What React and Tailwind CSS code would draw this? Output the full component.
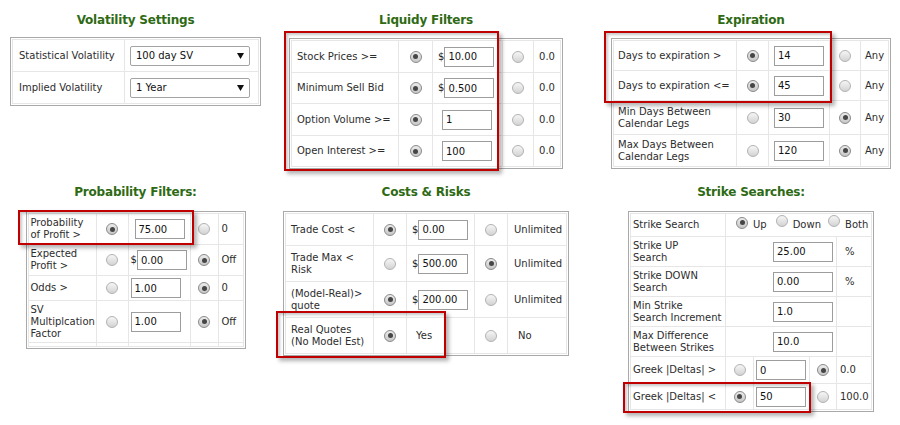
import React from "react";

function Radio({ on }) {
    return on ? (
        <span className="inline-flex h-[12px] w-[12px] shrink-0 items-center justify-center rounded-full border border-[#8a8a8a] bg-linear-to-b from-[#ececec] to-[#c6c6c6]">
            <span className="h-[5px] w-[5px] rounded-full bg-[#464646]" />
        </span>
    ) : (
        <span className="inline-block h-[12px] w-[12px] shrink-0 rounded-full border border-[#b2b2b2] bg-linear-to-b from-[#f6f6f6] to-[#d3d3d3]" />
    );
}

function Field({ value, wide }) {
    return (
        <input
            readOnly
            value={value}
            className={`${wide ? "w-[60px]" : "w-[50px]"} h-[20px] border border-[#9d9d9d] bg-white px-[3px] text-[10px] text-[#111] outline-none`}
        />
    );
}

function Money({ value }) {
    return (
        <>
            <span className="text-[#222]">$</span>
            <Field value={value} />
        </>
    );
}

function Select({ value }) {
    return (
        <div className="ml-[5px] flex h-[20px] w-[120px] items-center justify-between rounded-[2px] border border-[#a3a3a3] bg-white pl-[5px] pr-[5px] text-[#111]">
            <span>{value}</span>
            <svg width="7" height="6" viewBox="0 0 7 6">
                <path d="M0 0H7L3.5 6Z" fill="#111" />
            </svg>
        </div>
    );
}

function Title({ children }) {
    return (
        <div className="h-[20px] text-center text-[12px] font-bold leading-[20px] tracking-[-0.2px] text-[#2e6a14]">
            {children}
        </div>
    );
}

function Table({ cols, rows, children, className = "" }) {
    return (
        <div className={`border border-[#a9a9a9] bg-white p-px ${className}`}>
            <div className={`grid gap-px bg-[#e6e6e6] p-px ${cols} ${rows}`}>{children}</div>
        </div>
    );
}

function Cell({ children, className = "" }) {
    return <div className={`flex items-center bg-white leading-[12px] ${className}`}>{children}</div>;
}

function RadioCell({ on }) {
    return (
        <Cell className="justify-center">
            <Radio on={on} />
        </Cell>
    );
}

function Mark({ className }) {
    return (
        <div
            className={`pointer-events-none absolute border-2 border-[#c00000] shadow-[3px_3px_4px_rgba(0,0,0,0.3),inset_2px_2px_3px_rgba(0,0,0,0.22)] ${className}`}
        />
    );
}

const liquidity = [
    ["Stock Prices >=", "10.00", true],
    ["Minimum Sell Bid", "0.500", true],
    ["Option Volume >=", "1", false],
    ["Open Interest >=", "100", false],
];

const expiration = [
    [["Days to expiration >"], true, "14"],
    [["Days to expiration <="], true, "45"],
    [["Min Days Between", "Calendar Legs"], false, "30"],
    [["Max Days Between", "Calendar Legs"], false, "120"],
];

const costs = [
    [["Trade Cost <"], true, "0.00"],
    [["Trade Max <", "Risk"], false, "500.00"],
    [["(Model-Real)>", "quote"], true, "200.00"],
];

const strikes = [
    [["Strike UP", "Search"], "25.00", "%"],
    [["Strike DOWN", "Search"], "0.00", "%"],
    [["Min Strike", "Search Increment"], "1.0", ""],
    [["Max Difference", "Between Strikes"], "10.0", ""],
];

function Lines({ lines }) {
    return (
        <span>
            {lines.map((l, i) => (
                <React.Fragment key={i}>
                    {i > 0 && <br />}
                    {l}
                </React.Fragment>
            ))}
        </span>
    );
}

export default function App() {
    return (
        <div className="relative h-[425px] w-[900px] overflow-hidden bg-white pt-[10px] font-['DejaVu_Sans',sans-serif] text-[10px] text-[#2d2d2d]">
            {/* top row */}
            <div className="flex h-[172px]">
                <div className="flex w-[271px] flex-col items-center">
                    <Title>Volatility Settings</Title>
                    <Table cols="grid-cols-[111px_133px]" rows="grid-rows-[31px_31px]" className="mt-[7px]">
                        <Cell className="pl-[6px]">Statistical Volatility</Cell>
                        <Cell><Select value="100 day SV" /></Cell>
                        <Cell className="pl-[6px]">Implied Volatility</Cell>
                        <Cell><Select value="1 Year" /></Cell>
                    </Table>
                </div>

                <div className="flex w-[310px] flex-col items-center">
                    <Title>Liquidy Filters</Title>
                    <Table cols="grid-cols-[106px_33px_69px_30px_26px]" rows="grid-rows-[31px_30px_31px_30px]" className="mt-[8px]">
                        {liquidity.map(([label, val, dollar]) => (
                            <React.Fragment key={label}>
                                <Cell className="pl-[5px]">{label}</Cell>
                                <RadioCell on />
                                <Cell className={dollar ? "pl-[5px]" : "pl-[9px]"}>
                                    {dollar ? <Money value={val} /> : <Field value={val} />}
                                </Cell>
                                <RadioCell on={false} />
                                <Cell className="justify-center">0.0</Cell>
                            </React.Fragment>
                        ))}
                    </Table>
                </div>

                <div className="ml-[21px] flex w-[298px] flex-col items-center">
                    <Title>Expiration</Title>
                    <Table cols="grid-cols-[122px_31px_60px_30px_27px]" rows="grid-rows-[29px_29px_33px_31px]" className="mt-[8px]">
                        {expiration.map(([lines, first, val]) => (
                            <React.Fragment key={lines.join()}>
                                <Cell className="pl-[4px]"><Lines lines={lines} /></Cell>
                                <RadioCell on={first} />
                                <Cell className="justify-center"><Field value={val} /></Cell>
                                <RadioCell on={!first} />
                                <Cell className="pl-[4px]">Any</Cell>
                            </React.Fragment>
                        ))}
                    </Table>
                </div>
            </div>

            {/* bottom row */}
            <div className="flex">
                <div className="flex w-[271px] flex-col items-center">
                    <Title>Probability Filters:</Title>
                    <Table cols="grid-cols-[67px_31px_61px_27px_24px]" rows="grid-rows-[30px_30px_24px_41px_3px]" className="mt-[9px]">
                        <Cell className="pl-[2px]"><Lines lines={["Probability", "of Profit >"]} /></Cell>
                        <RadioCell on />
                        <Cell className="pl-[6px]"><Field value="75.00" /></Cell>
                        <RadioCell on={false} />
                        <Cell className="pl-[3px]">0</Cell>

                        <Cell className="pl-[2px]"><Lines lines={["Expected", "Profit >"]} /></Cell>
                        <RadioCell on={false} />
                        <Cell className="pl-[2px]"><Money value="0.00" /></Cell>
                        <RadioCell on />
                        <Cell className="pl-[3px]">Off</Cell>

                        <Cell className="pl-[2px]">Odds &gt;</Cell>
                        <RadioCell on={false} />
                        <Cell className="pl-[2px]"><Field value="1.00" /></Cell>
                        <RadioCell on />
                        <Cell className="pl-[3px]">0</Cell>

                        <Cell className="pl-[2px]"><Lines lines={["SV", "Multiplcation", "Factor"]} /></Cell>
                        <RadioCell on={false} />
                        <Cell className="pl-[2px]"><Field value="1.00" /></Cell>
                        <RadioCell on />
                        <Cell className="pl-[3px]">Off</Cell>

                        <Cell /><Cell /><Cell /><Cell /><Cell />
                    </Table>
                </div>

                <div className="flex w-[310px] flex-col items-center">
                    <Title>Costs &amp; Risks</Title>
                    <Table cols="grid-cols-[87px_32px_67px_32px_58px]" rows="grid-rows-[31px_35px_35px_35px]" className="mt-[9px]">
                        {costs.map(([lines, first, val]) => (
                            <React.Fragment key={lines.join()}>
                                <Cell className="pl-[5px]"><Lines lines={lines} /></Cell>
                                <RadioCell on={first} />
                                <Cell className="pl-[5px]"><Money value={val} /></Cell>
                                <RadioCell on={!first} />
                                <Cell className="pl-[6px]">Unlimited</Cell>
                            </React.Fragment>
                        ))}
                        <Cell className="pl-[5px]"><Lines lines={["Real Quotes", "(No Model Est)"]} /></Cell>
                        <RadioCell on />
                        <Cell className="pl-[9px]">Yes</Cell>
                        <RadioCell on={false} />
                        <Cell className="pl-[10px]">No</Cell>
                    </Table>
                </div>

                <div className="ml-[21px] flex w-[298px] flex-col items-center">
                    <Title>Strike Searches:</Title>
                    <Table cols="grid-cols-[94px_27px_55px_26px_34px]" rows="grid-rows-[22px_29px_29px_29px_29px_26px_25px]" className="mt-[9px]">
                        <Cell className="pl-[2px]">Strike Search</Cell>
                        <Cell className="col-span-4 pl-[10px]">
                            <span className="mb-[5px]"><Radio on /></span>
                            <span className="ml-[5px]">Up</span>
                            <span className="mb-[5px] ml-[9px]"><Radio on={false} /></span>
                            <span className="ml-[5px]">Down</span>
                            <span className="mb-[5px] ml-[7px]"><Radio on={false} /></span>
                            <span className="ml-[5px]">Both</span>
                        </Cell>
                        {strikes.map(([lines, val, unit]) => (
                            <React.Fragment key={lines.join()}>
                                <Cell className="pl-[2px]"><Lines lines={lines} /></Cell>
                                <Cell className="col-span-3 pl-[47px]"><Field value={val} wide /></Cell>
                                <Cell className="pl-[8px]">{unit}</Cell>
                            </React.Fragment>
                        ))}
                        <Cell className="pl-[2px]">Greek |Deltas| &gt;</Cell>
                        <RadioCell on={false} />
                        <Cell className="pl-[2px]"><Field value="0" /></Cell>
                        <RadioCell on />
                        <Cell className="pl-[3px]">0.0</Cell>

                        <Cell className="pl-[2px]">Greek |Deltas| &lt;</Cell>
                        <RadioCell on />
                        <Cell className="pl-[2px]"><Field value="50" /></Cell>
                        <RadioCell on={false} />
                        <Cell className="pl-[3px]">100.0</Cell>
                    </Table>
                </div>
            </div>

            {/* annotation boxes */}
            <Mark className="left-[284px] top-[31px] h-[140px] w-[215px]" />
            <Mark className="left-[604px] top-[31px] h-[72px] w-[228px]" />
            <Mark className="left-[18px] top-[210px] h-[35px] w-[176px]" />
            <Mark className="left-[276px] top-[311px] h-[47px] w-[170px]" />
            <Mark className="left-[623px] top-[382px] h-[31px] w-[188px]" />
        </div>
    );
}
